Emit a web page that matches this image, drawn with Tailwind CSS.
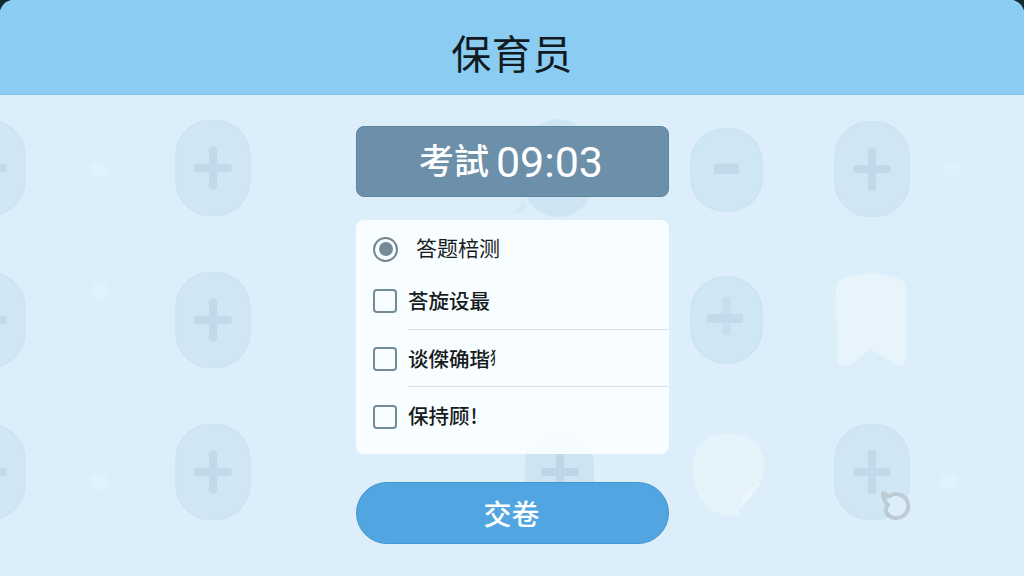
<!DOCTYPE html>
<html lang="zh-CN">
<head>
  <meta charset="UTF-8" />
  <title>保育员</title>
  <script src="https://cdn.jsdelivr.net/npm/@tailwindcss/browser@4"></script>
</head>
<body class="bg-[#0e2a33]">
  <div class="relative w-[1024px] h-[576px] overflow-hidden rounded-t-[14px] bg-[#dbeefa] font-['Noto_Sans_CJK_SC',sans-serif] flex flex-col">

    <!-- Background pattern -->
    <svg class="absolute inset-0" width="1024" height="576" viewBox="0 0 1024 576" fill="none">
      <defs>
        <g id="plus" stroke="#c1d9e9" stroke-width="8" stroke-linecap="round">
          <path d="M-15 0H15M0 -18V18" />
        </g>
        <g id="tile">
          <rect x="-37" y="-47.5" width="74" height="95" rx="35" fill="#d0e6f4" stroke="#cde3f1" stroke-width="1.5" />
          <use href="#plus" />
        </g>
      </defs>
      <use href="#tile" x="-12" y="168" />
      <use href="#tile" x="-12" y="320" />
      <use href="#tile" x="-12" y="472" />
      <use href="#tile" x="213" y="168" />
      <use href="#tile" x="213" y="320" />
      <use href="#tile" x="213" y="472" />
      <use href="#tile" x="872" y="169" />
      <use href="#tile" x="872" y="472" />
      <rect x="523" y="119" width="70" height="98" rx="35" fill="#cfe5f4" />
      <path d="M523 198C521 205 516 210 511 214C518 213 523 210 528 206Z" fill="#d3e8f5" />
      <rect x="525" y="432" width="69" height="84" rx="32" fill="#cde4f3" />
      <path d="M545 472H575M560 457V487" stroke="#bcd6e7" stroke-width="8" stroke-linecap="round" />
      <rect x="691" y="129" width="71" height="82" rx="33" fill="#cfe6f4" stroke="#cbe3f2" stroke-width="1.5" />
      <rect x="714" y="163.5" width="25" height="10.5" rx="1.5" fill="#c1d9e9" />
      <rect x="691" y="277" width="71" height="86" rx="34" fill="#cfe6f4" stroke="#cbe3f2" stroke-width="1.5" />
      <rect x="722" y="297" width="9" height="38" rx="4" fill="#c7dfee" />
      <rect x="707" y="314" width="36" height="9" rx="1.5" fill="#c2daea" />

      <!-- bookmark -->
      <path d="M836 286Q837 281 843 278Q871 269 900 279Q906 282 906 287V358Q905 367 896 365L871 349L848 366Q838 367 837 359Z" fill="#e7f4fc" />

      <!-- sticker with a folded corner -->
      <path d="M693 470C692 445 705 434 728 434C752 433 764 446 764 466C764 485 752 503 740 515C712 520 694 501 693 470Z" fill="#e5f3fb" />
      <path d="M763 480C755 482 742 492 738 507L740 515C752 505 761 494 763 480Z" fill="#ddeef8" />
      <path d="M761 482C750 486 741 496 738 510C747 500 756 493 761 482Z" fill="#ebf6fc" />

      <g fill="#dff1fb">
        <rect x="90" y="162" width="17" height="15" rx="5" />
        <rect x="91" y="282" width="18" height="17" rx="6" />
        <rect x="90" y="474" width="18" height="16" rx="6" />
        <rect x="943" y="162" width="17" height="15" rx="5" />
        <rect x="940" y="474" width="18" height="15" rx="6" />
      </g>

      <!-- ring -->
      <circle cx="896" cy="505.5" r="10.5" fill="#dceefa" />
      <path d="M888.5 497A12 12 0 1 1 886.5 513Q885 508 888 505Q883 500 883 493.500Q887 494 888.500 498" stroke="#bccbd4" stroke-width="4" stroke-linejoin="round" />
    </svg>

    <header class="relative h-[94.5px] shrink-0 bg-[#8bccf3] border-b border-[#84c2e6] flex items-center justify-center pt-[11px]">
      <h1 class="text-[40px] leading-none tracking-[0.5px] text-[#101a20]">保育员</h1>
    </header>

    <main class="relative w-[313px] ml-[356px] mt-[31px] flex flex-col">
      <!-- Timer -->
      <div class="h-[71.5px] rounded-lg bg-[#6c90a9] border border-[#5f849d] text-white flex items-center justify-center">
        <span class="-mt-[5px] text-[35px] font-medium leading-none font-['Noto_Sans_CJK_TC',sans-serif]">考試</span>
        <span class="mt-[3px] mr-[3px] ml-[7px] text-[43px] leading-none font-[Roboto,sans-serif]">09:03</span>
      </div>

      <!-- Questions -->
      <div class="mt-[23px] h-[234px] rounded-lg bg-[#fbfeff]/90 text-[21px] leading-none text-[#161b1d] flex flex-col">
        <label class="h-[58px] pl-[17px] flex items-center">
          <span class="size-[25px] rounded-full border-2 border-[#71848f] flex items-center justify-center">
            <span class="size-[14px] rounded-full bg-[#758996]"></span>
          </span>
          <span class="ml-[18px] -mt-[3px]">答题棓测</span>
        </label>
        <label class="h-[52px] pl-[17px] flex">
          <span class="mt-[11px] size-[24px] rounded border-2 border-[#718b99]"></span>
          <span class="ml-[11px] flex-1 pt-[12px] border-b border-[#dbe2e5] text-[20.5px] font-medium">荅旋设最</span>
        </label>
        <label class="h-[57px] pl-[17px] flex">
          <span class="mt-[17px] size-[24px] rounded border-2 border-[#718b99]"></span>
          <span class="ml-[11px] flex-1 pt-[18px] border-b border-[#dbe2e5] text-[20.5px] font-medium flex">谈傑确瑎<span class="text-[17px] w-[8px] origin-left scale-x-60">犭</span></span>
        </label>
        <label class="h-[57px] pl-[17px] flex">
          <span class="mt-[18px] size-[24px] rounded border-2 border-[#718b99]"></span>
          <span class="ml-[11px] flex-1 pt-[18px] text-[20.5px] font-medium">保持顾<span class="ml-[1px]">!</span></span>
        </label>
      </div>

      <button class="mt-[28px] h-[62px] pr-[2px] pb-[1px] rounded-full bg-[#51a5e1] border border-[#4596cf] text-white text-[28px] font-medium leading-none">交卷</button>
    </main>
  </div>
</body>
</html>
